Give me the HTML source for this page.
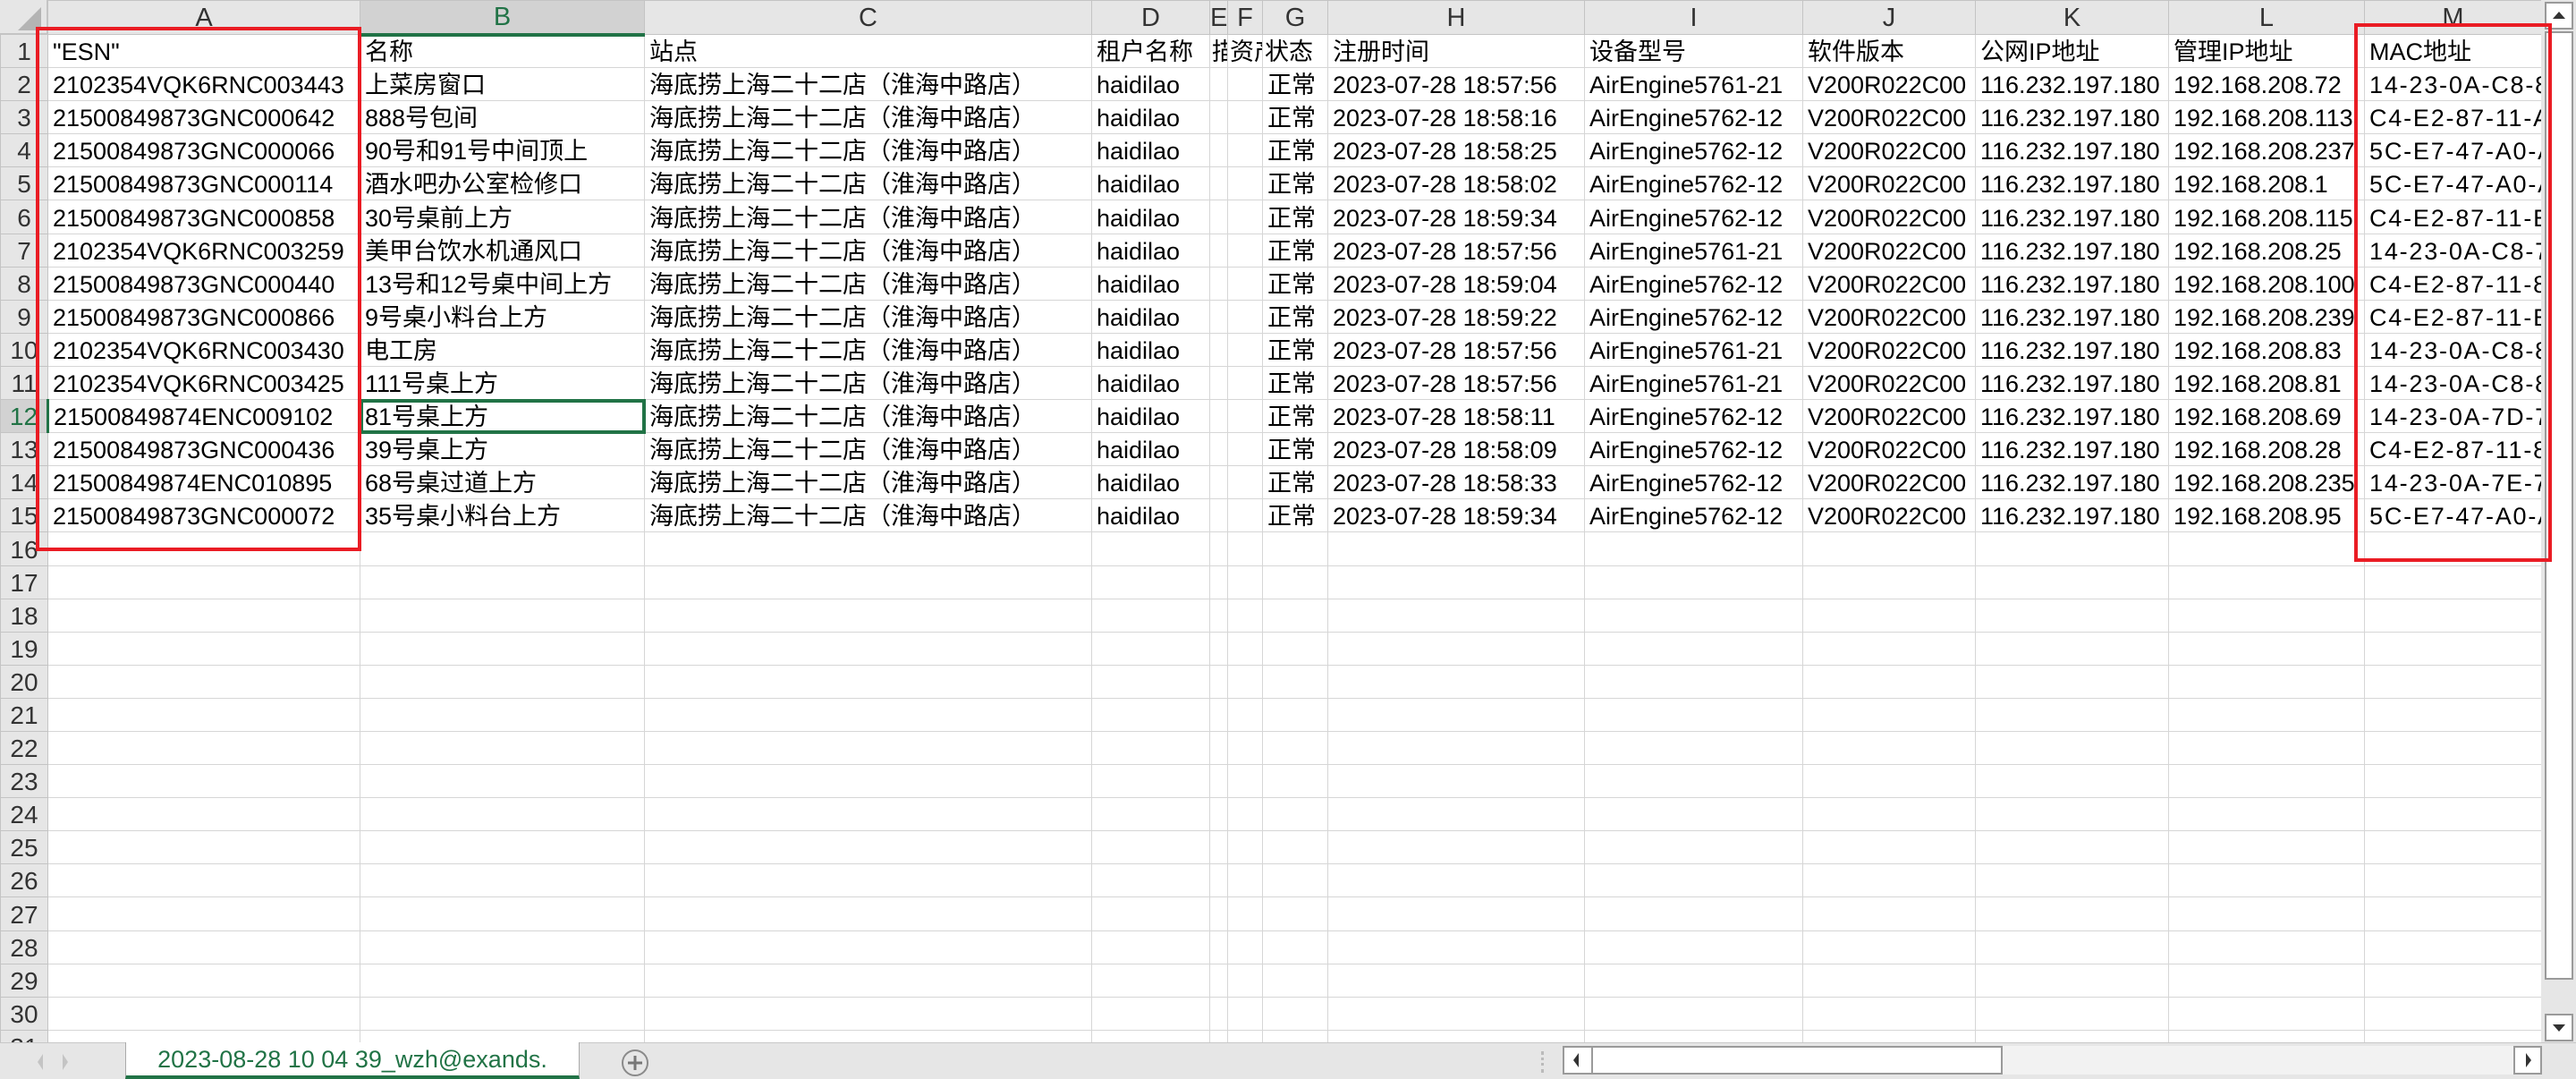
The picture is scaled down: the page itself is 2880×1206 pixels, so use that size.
<!DOCTYPE html>
<html><head><meta charset="utf-8">
<style>
*{margin:0;padding:0;box-sizing:border-box}
body{width:2880px;height:1206px;overflow:hidden;background:#e6e6e6;position:relative;font-family:"Liberation Sans","Noto Sans CJK SC",sans-serif;}
#grid{position:absolute;left:0;top:0;width:2841px;height:1165px;overflow:hidden;background:#fff}
table{border-collapse:collapse;table-layout:fixed;width:2841px}
td{height:37.1px;border:1px solid #d6d6d6;white-space:nowrap;overflow:hidden;font-size:27px;padding:0 0 0 5px;color:#000;line-height:34px;vertical-align:bottom;letter-spacing:0}
tr.h td{height:38px;background:#e6e6e6;border-color:#c4c4c4;text-align:center;padding:0;color:#333;vertical-align:middle;font-size:29px}
td.r{background:#e6e6e6;border-color:#c4c4c4;text-align:center;padding:0;color:#333;font-size:28px}
tr.h td.sel{background:#d2d2d2;color:#217346;border-bottom:4px solid #217346}
td.rsel{background:#d2d2d2;color:#217346;border-right:3px solid #217346}
td.m{letter-spacing:1.8px}
.red{position:absolute;border:4px solid #ea1c24}
</style></head><body>
<div id="grid">
<table>
<colgroup><col style="width:53px"><col style="width:349px"><col style="width:318px"><col style="width:500px"><col style="width:132px"><col style="width:20px"><col style="width:39px"><col style="width:73px"><col style="width:287px"><col style="width:244px"><col style="width:193px"><col style="width:216px"><col style="width:219px"><col style="width:198px"></colgroup>
<tr class="h"><td></td><td>A</td><td class="sel">B</td><td>C</td><td>D</td><td>E</td><td>F</td><td>G</td><td>H</td><td>I</td><td>J</td><td>K</td><td>L</td><td>M</td></tr>
<tr><td class="r">1</td><td>"ESN"</td><td>名称</td><td>站点</td><td>租户名称</td><td style="padding-left:2px">描述</td><td style="padding-left:2px">资产</td><td style="padding-left:2px">状态</td><td>注册时间</td><td>设备型号</td><td>软件版本</td><td>公网IP地址</td><td>管理IP地址</td><td>MAC地址</td></tr>
<tr><td class="r">2</td><td>2102354VQK6RNC003443</td><td>上菜房窗口</td><td>海底捞上海二十二店（淮海中路店）</td><td>haidilao</td><td></td><td></td><td>正常</td><td>2023-07-28 18:57:56</td><td>AirEngine5761-21</td><td>V200R022C00</td><td>116.232.197.180</td><td>192.168.208.72</td><td class="m">14-23-0A-C8-8E-10</td></tr>
<tr><td class="r">3</td><td>21500849873GNC000642</td><td>888号包间</td><td>海底捞上海二十二店（淮海中路店）</td><td>haidilao</td><td></td><td></td><td>正常</td><td>2023-07-28 18:58:16</td><td>AirEngine5762-12</td><td>V200R022C00</td><td>116.232.197.180</td><td>192.168.208.113</td><td class="m">C4-E2-87-11-A0-20</td></tr>
<tr><td class="r">4</td><td>21500849873GNC000066</td><td>90号和91号中间顶上</td><td>海底捞上海二十二店（淮海中路店）</td><td>haidilao</td><td></td><td></td><td>正常</td><td>2023-07-28 18:58:25</td><td>AirEngine5762-12</td><td>V200R022C00</td><td>116.232.197.180</td><td>192.168.208.237</td><td class="m">5C-E7-47-A0-A1-30</td></tr>
<tr><td class="r">5</td><td>21500849873GNC000114</td><td>酒水吧办公室检修口</td><td>海底捞上海二十二店（淮海中路店）</td><td>haidilao</td><td></td><td></td><td>正常</td><td>2023-07-28 18:58:02</td><td>AirEngine5762-12</td><td>V200R022C00</td><td>116.232.197.180</td><td>192.168.208.1</td><td class="m">5C-E7-47-A0-A2-40</td></tr>
<tr><td class="r">6</td><td>21500849873GNC000858</td><td>30号桌前上方</td><td>海底捞上海二十二店（淮海中路店）</td><td>haidilao</td><td></td><td></td><td>正常</td><td>2023-07-28 18:59:34</td><td>AirEngine5762-12</td><td>V200R022C00</td><td>116.232.197.180</td><td>192.168.208.115</td><td class="m">C4-E2-87-11-E0-50</td></tr>
<tr><td class="r">7</td><td>2102354VQK6RNC003259</td><td>美甲台饮水机通风口</td><td>海底捞上海二十二店（淮海中路店）</td><td>haidilao</td><td></td><td></td><td>正常</td><td>2023-07-28 18:57:56</td><td>AirEngine5761-21</td><td>V200R022C00</td><td>116.232.197.180</td><td>192.168.208.25</td><td class="m">14-23-0A-C8-7E-60</td></tr>
<tr><td class="r">8</td><td>21500849873GNC000440</td><td>13号和12号桌中间上方</td><td>海底捞上海二十二店（淮海中路店）</td><td>haidilao</td><td></td><td></td><td>正常</td><td>2023-07-28 18:59:04</td><td>AirEngine5762-12</td><td>V200R022C00</td><td>116.232.197.180</td><td>192.168.208.100</td><td class="m">C4-E2-87-11-8A-70</td></tr>
<tr><td class="r">9</td><td>21500849873GNC000866</td><td>9号桌小料台上方</td><td>海底捞上海二十二店（淮海中路店）</td><td>haidilao</td><td></td><td></td><td>正常</td><td>2023-07-28 18:59:22</td><td>AirEngine5762-12</td><td>V200R022C00</td><td>116.232.197.180</td><td>192.168.208.239</td><td class="m">C4-E2-87-11-E8-80</td></tr>
<tr><td class="r">10</td><td>2102354VQK6RNC003430</td><td>电工房</td><td>海底捞上海二十二店（淮海中路店）</td><td>haidilao</td><td></td><td></td><td>正常</td><td>2023-07-28 18:57:56</td><td>AirEngine5761-21</td><td>V200R022C00</td><td>116.232.197.180</td><td>192.168.208.83</td><td class="m">14-23-0A-C8-8A-90</td></tr>
<tr><td class="r">11</td><td>2102354VQK6RNC003425</td><td>111号桌上方</td><td>海底捞上海二十二店（淮海中路店）</td><td>haidilao</td><td></td><td></td><td>正常</td><td>2023-07-28 18:57:56</td><td>AirEngine5761-21</td><td>V200R022C00</td><td>116.232.197.180</td><td>192.168.208.81</td><td class="m">14-23-0A-C8-8B-A0</td></tr>
<tr><td class="r rsel">12</td><td>21500849874ENC009102</td><td style="outline:4px solid #217346;outline-offset:-3px">81号桌上方</td><td>海底捞上海二十二店（淮海中路店）</td><td>haidilao</td><td></td><td></td><td>正常</td><td>2023-07-28 18:58:11</td><td>AirEngine5762-12</td><td>V200R022C00</td><td>116.232.197.180</td><td>192.168.208.69</td><td class="m">14-23-0A-7D-7C-B0</td></tr>
<tr><td class="r">13</td><td>21500849873GNC000436</td><td>39号桌上方</td><td>海底捞上海二十二店（淮海中路店）</td><td>haidilao</td><td></td><td></td><td>正常</td><td>2023-07-28 18:58:09</td><td>AirEngine5762-12</td><td>V200R022C00</td><td>116.232.197.180</td><td>192.168.208.28</td><td class="m">C4-E2-87-11-8C-C0</td></tr>
<tr><td class="r">14</td><td>21500849874ENC010895</td><td>68号桌过道上方</td><td>海底捞上海二十二店（淮海中路店）</td><td>haidilao</td><td></td><td></td><td>正常</td><td>2023-07-28 18:58:33</td><td>AirEngine5762-12</td><td>V200R022C00</td><td>116.232.197.180</td><td>192.168.208.235</td><td class="m">14-23-0A-7E-7D-D0</td></tr>
<tr><td class="r">15</td><td>21500849873GNC000072</td><td>35号桌小料台上方</td><td>海底捞上海二十二店（淮海中路店）</td><td>haidilao</td><td></td><td></td><td>正常</td><td>2023-07-28 18:59:34</td><td>AirEngine5762-12</td><td>V200R022C00</td><td>116.232.197.180</td><td>192.168.208.95</td><td class="m">5C-E7-47-A0-AE-E0</td></tr>
<tr><td class="r">16</td><td></td><td></td><td></td><td></td><td></td><td></td><td></td><td></td><td></td><td></td><td></td><td></td><td></td></tr>
<tr><td class="r">17</td><td></td><td></td><td></td><td></td><td></td><td></td><td></td><td></td><td></td><td></td><td></td><td></td><td></td></tr>
<tr><td class="r">18</td><td></td><td></td><td></td><td></td><td></td><td></td><td></td><td></td><td></td><td></td><td></td><td></td><td></td></tr>
<tr><td class="r">19</td><td></td><td></td><td></td><td></td><td></td><td></td><td></td><td></td><td></td><td></td><td></td><td></td><td></td></tr>
<tr><td class="r">20</td><td></td><td></td><td></td><td></td><td></td><td></td><td></td><td></td><td></td><td></td><td></td><td></td><td></td></tr>
<tr><td class="r">21</td><td></td><td></td><td></td><td></td><td></td><td></td><td></td><td></td><td></td><td></td><td></td><td></td><td></td></tr>
<tr><td class="r">22</td><td></td><td></td><td></td><td></td><td></td><td></td><td></td><td></td><td></td><td></td><td></td><td></td><td></td></tr>
<tr><td class="r">23</td><td></td><td></td><td></td><td></td><td></td><td></td><td></td><td></td><td></td><td></td><td></td><td></td><td></td></tr>
<tr><td class="r">24</td><td></td><td></td><td></td><td></td><td></td><td></td><td></td><td></td><td></td><td></td><td></td><td></td><td></td></tr>
<tr><td class="r">25</td><td></td><td></td><td></td><td></td><td></td><td></td><td></td><td></td><td></td><td></td><td></td><td></td><td></td></tr>
<tr><td class="r">26</td><td></td><td></td><td></td><td></td><td></td><td></td><td></td><td></td><td></td><td></td><td></td><td></td><td></td></tr>
<tr><td class="r">27</td><td></td><td></td><td></td><td></td><td></td><td></td><td></td><td></td><td></td><td></td><td></td><td></td><td></td></tr>
<tr><td class="r">28</td><td></td><td></td><td></td><td></td><td></td><td></td><td></td><td></td><td></td><td></td><td></td><td></td><td></td></tr>
<tr><td class="r">29</td><td></td><td></td><td></td><td></td><td></td><td></td><td></td><td></td><td></td><td></td><td></td><td></td><td></td></tr>
<tr><td class="r">30</td><td></td><td></td><td></td><td></td><td></td><td></td><td></td><td></td><td></td><td></td><td></td><td></td><td></td></tr>
<tr><td class="r">31</td><td></td><td></td><td></td><td></td><td></td><td></td><td></td><td></td><td></td><td></td><td></td><td></td><td></td></tr>
</table>
</div>
<div style="position:absolute;left:0;top:0;width:53px;height:38px;background:#e6e6e6;border-right:1px solid #c4c4c4;border-bottom:1px solid #c4c4c4"><svg width="53" height="38"><polygon points="46,8 46,34 20,34" fill="#b4b4b4"/></svg></div>
<div style="position:absolute;left:2845px;top:2px;width:32px;height:31px;background:#fff;border:2px solid #9a9a9a"><svg width="28" height="27"><polygon points="7,17 21,17 14,9" fill="#333"/></svg></div>
<div style="position:absolute;left:2845px;top:35px;width:32px;height:1060px;background:#fff;border:2px solid #9a9a9a"></div>
<div style="position:absolute;left:2845px;top:1133px;width:32px;height:31px;background:#fff;border:2px solid #9a9a9a"><svg width="28" height="27"><polygon points="7,10 21,10 14,18" fill="#333"/></svg></div>
<div style="position:absolute;left:0;top:1165px;width:2880px;height:41px;background:#e6e6e6;border-top:1px solid #c8c8c8"></div>
<svg style="position:absolute;left:28px;top:1172px" width="60" height="30"><polygon points="14,15 20,6 20,24" fill="#c4c4c4"/><polygon points="48,15 42,6 42,24" fill="#c4c4c4"/></svg>
<div style="position:absolute;left:140px;top:1165px;width:508px;height:41px;background:#fff;border-left:1px solid #aaa;border-right:1px solid #aaa;border-bottom:4px solid #217346;color:#217346;font-size:27px;text-align:center;line-height:38px">2023-08-28 10 04 39_wzh@exands.</div>
<svg style="position:absolute;left:693px;top:1172px" width="34" height="32"><circle cx="17" cy="16" r="14" fill="none" stroke="#8a8a8a" stroke-width="2"/><path d="M17 8v16M9 16h16" stroke="#777" stroke-width="3"/></svg>
<div style="position:absolute;left:1723px;top:1175px;width:3px;height:24px;border-left:3px dotted #bbb"></div>
<div style="position:absolute;left:1747px;top:1169px;width:1095px;height:32px;background:#f2f2f2"></div>
<div style="position:absolute;left:1747px;top:1169px;width:34px;height:32px;background:#fff;border:2px solid #9a9a9a"><svg width="30" height="28"><polygon points="10,14 16,6 16,22" fill="#333"/></svg></div>
<div style="position:absolute;left:1779px;top:1169px;width:460px;height:32px;background:#fff;border:2px solid #9a9a9a"></div>
<div style="position:absolute;left:2810px;top:1169px;width:32px;height:32px;background:#fff;border:2px solid #9a9a9a"><svg width="28" height="28"><polygon points="18,14 12,6 12,22" fill="#333"/></svg></div>
<div class="red" style="left:40px;top:30px;width:364px;height:586px"></div>
<div class="red" style="left:2632px;top:26px;width:221px;height:602px"></div>
</body></html>
